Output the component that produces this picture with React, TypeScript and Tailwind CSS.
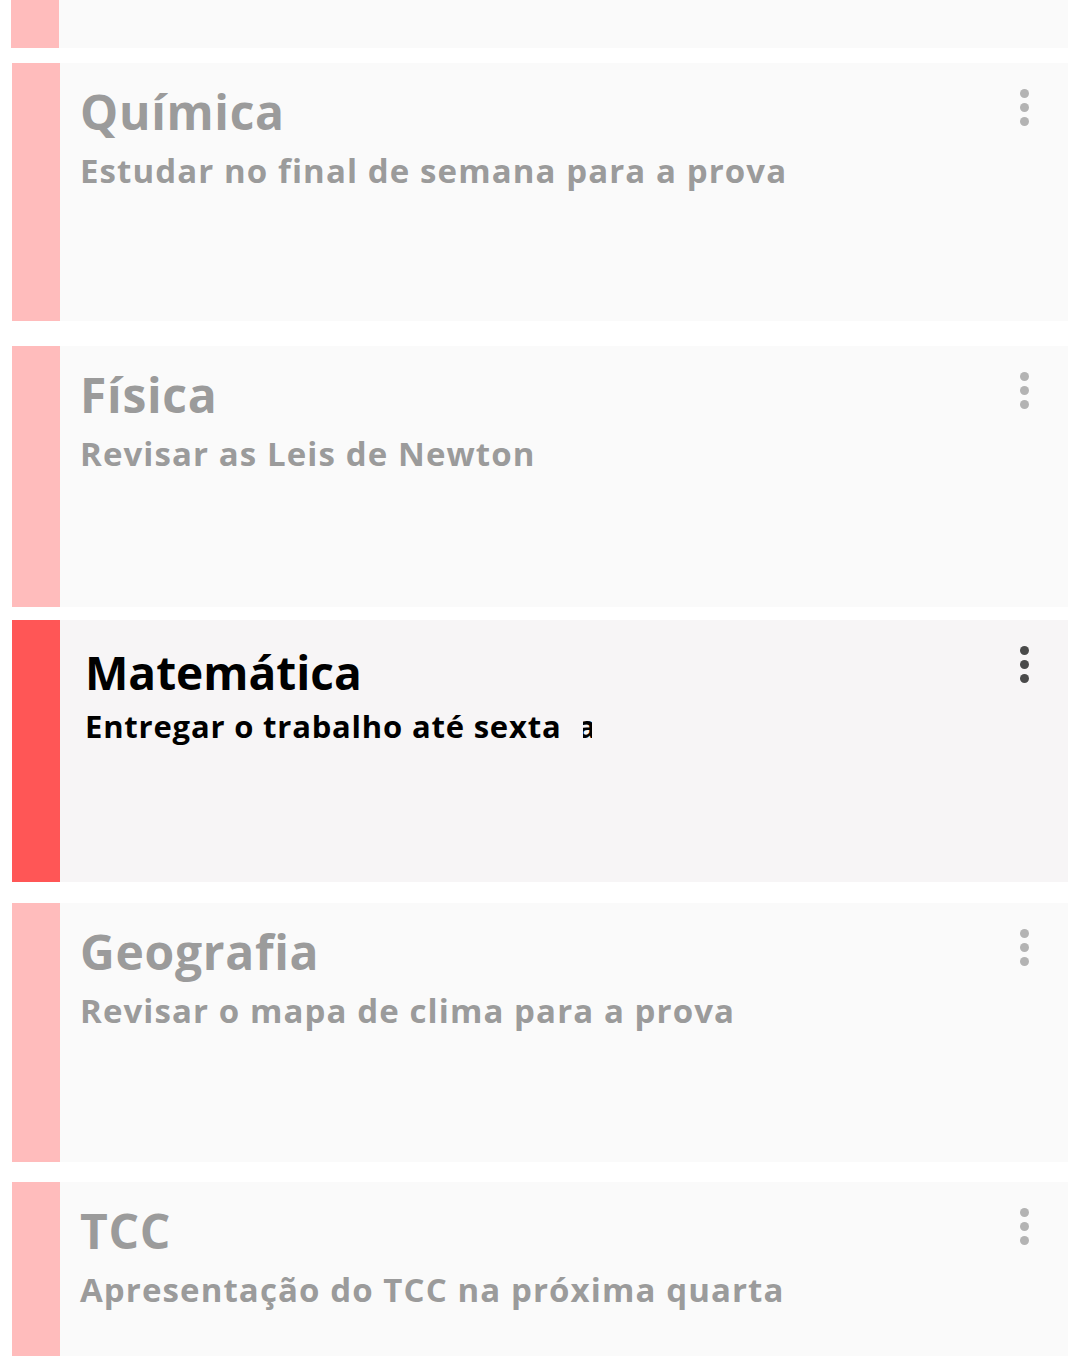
import React from 'react';

type Task = {
  title: string;
  note: string;
  active?: boolean;
  mt: string;
  h: string;
};

const tasks: Task[] = [
  { title: 'Química', note: 'Estudar no final de semana para a prova', mt: 'mt-[15px]', h: 'h-[258px]' },
  { title: 'Física', note: 'Revisar as Leis de Newton', mt: 'mt-[25px]', h: 'h-[261px]' },
  { title: 'Matemática', note: 'Entregar o trabalho até sexta', active: true, mt: 'mt-[13px]', h: 'h-[262px]' },
  { title: 'Geografia', note: 'Revisar o mapa de clima para a prova', mt: 'mt-[21px]', h: 'h-[259px]' },
  { title: 'TCC', note: 'Apresentação do TCC na próxima quarta', mt: 'mt-[20px]', h: 'h-[259px]' },
];

const Dots = ({ active }: { active?: boolean }) => (
  <div className="flex flex-col items-center gap-[5px] pt-[26px] pr-[39px]">
    {[0, 1, 2].map((i) => (
      <span
        key={i}
        className={`block w-[9px] h-[9px] rounded-full ${active ? 'bg-[#4a4a4a]' : 'bg-[#b3b3b3]'}`}
      />
    ))}
  </div>
);

const TaskCard = ({ task }: { task: Task }) => (
  <div className={`flex ml-[12px] mr-[12px] ${task.mt} ${task.h} ${task.active ? 'bg-[#f7f5f6]' : 'bg-[#fafafa]'}`}>
    <div className={`w-[48px] shrink-0 ${task.active ? 'bg-[#ff5656]' : 'bg-[#ffbcbc]'}`} />
    {task.active ? (
      <div className="flex-1 font-bold text-black pl-[25px] pt-[29px]">
        <div className="text-[46px] leading-none">{task.title}</div>
        <div className="mt-[16px] text-[31px] leading-none tracking-[0.8px] flex items-end">
          {task.note}
          <span className="ml-[22px] inline-block w-[9px] overflow-hidden">
            <span className="-ml-[6px] inline-block">a</span>
          </span>
        </div>
      </div>
    ) : (
      <div className="flex-1 font-bold text-[#9b9b9b] pl-[20px] pt-[25px]">
        <div className="text-[48px] leading-none tracking-[0.7px]">{task.title}</div>
        <div className="mt-[18px] text-[33px] leading-none tracking-[1.1px]">{task.note}</div>
      </div>
    )}
    <Dots active={task.active} />
  </div>
);

export default function App() {
  return (
    <div className="w-[1080px] h-[1356px] overflow-hidden bg-white font-['Open_Sans',sans-serif]">
      <div className="flex ml-[11px] mr-[12px] h-[48px] bg-[#fafafa]">
        <div className="w-[48px] bg-[#ffbcbc]" />
      </div>
      {tasks.map((t) => (
        <TaskCard key={t.title} task={t} />
      ))}
    </div>
  );
}
